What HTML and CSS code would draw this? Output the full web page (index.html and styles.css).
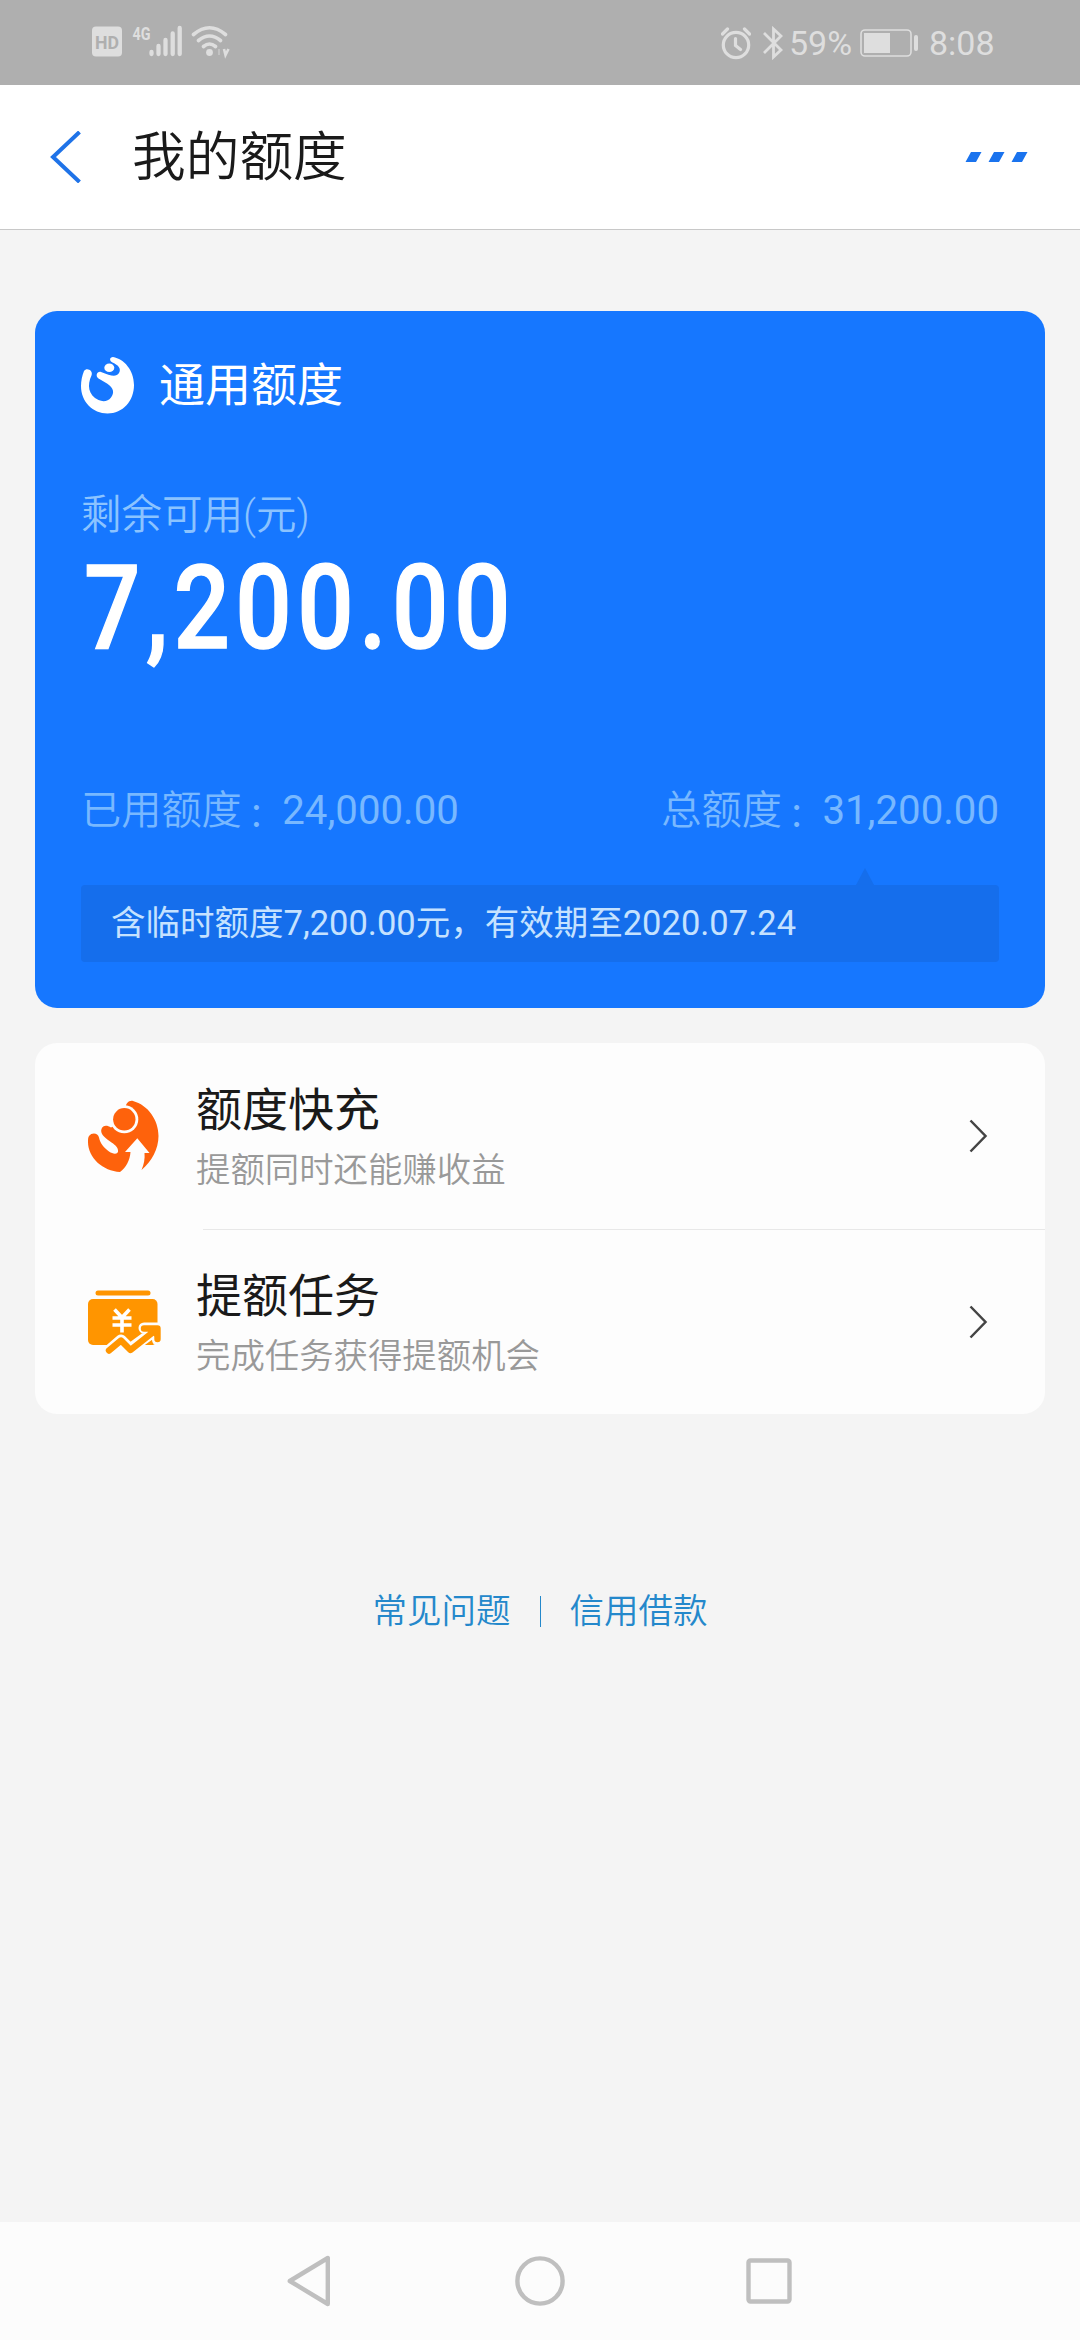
FILE: index.html
```html
<!DOCTYPE html>
<html lang="zh-CN">
<head>
<meta charset="utf-8">
<title>我的额度</title>
<link rel="stylesheet" href="styles.css">
</head>
<body>
<div class="status">
  <svg class="status-left" width="140" height="40" viewBox="0 0 140 40" fill="none" stroke="#dedede">
    <rect x="0" y="4.500" width="30" height="30" rx="4" fill="#dedede" stroke="none"/>
    <text class="hd" x="3" y="26.500" textLength="24" lengthAdjust="spacingAndGlyphs">HD</text>
    <text class="gen" x="40.500" y="17.500" textLength="18" lengthAdjust="spacingAndGlyphs">4G</text>
    <path stroke-width="4.300" stroke-linecap="round" d="M59.500 30v2M66.500 24v8M73.500 18v14M80.700 11.500V32M87.700 6v26"/>
    <path stroke-width="3.600" stroke-linecap="round" d="M101.500 12.500Q117.500-1 133.500 12.500M106.500 18.500Q117.500 9.500 128.500 18.500M111.500 24.500Q117.500 19.500 123.500 24.500"/>
    <circle cx="117.500" cy="30.500" r="3.400" fill="#dedede" stroke="none"/>
    <path stroke-width="2.600" d="M132 27l1.500 6 3-6"/><path stroke-width="2" opacity=".4" d="M127 27v6"/>
  </svg>
  <div class="status-right">
    <svg width="30" height="34" viewBox="0 0 30 34" fill="none" stroke="#dedede" stroke-width="3.200" stroke-linecap="round">
      <circle cx="15" cy="19" r="12.700"/><path d="M14.500 12.500v7l5 4M1.500 8l5-5M28.500 8l-5-5"/>
    </svg>
    <svg class="bt" width="20" height="34" viewBox="0 0 20 34" fill="none" stroke="#dedede" stroke-width="2.800">
      <path d="M1 7l17 17-7.500 7V3l7.500 7L1 27"/>
    </svg>
    <span class="percent">59%</span>
    <svg class="battery" width="59" height="28" viewBox="0 0 59 28">
      <rect x="1" y="1" width="50" height="26" rx="4" fill="none" stroke="#dedede" stroke-width="1.600"/>
      <rect x="4" y="4" width="26" height="20" fill="#dedede"/><rect x="54" y="6" width="4" height="16" rx="2" fill="#dedede"/>
    </svg>
    <span class="time">8:08</span>
  </div>
</div>
<header class="header">
  <svg class="back" width="32" height="52" viewBox="0 0 32 52"><path d="M29.500 1L3 26l26.500 25" fill="none" stroke="#1f73e8" stroke-width="4"/></svg>
  <h1 class="title">我的额度</h1>
  <svg class="more" width="64" height="12" viewBox="0 0 64 12" fill="#1a73ee"><path d="M6 1h10.500l-5.500 10H.500zM29 1h10.500L34 11H23.500zM52 1h10.500L57 11H46.500z"/></svg>
</header>
<main class="main">
  <section class="quota">
    <div class="quota-head">
      <svg width="54" height="57" viewBox="0 0 54 57" fill="#fff">
        <path d="M3 14C1 19 0 24 0 29 0 45 12 56.500 26.500 56.500 42 56.500 53 44 53 28 53 13 43 2 32 0 28.500 0 28 4 31.500 5.500 37.500 8 40.500 12 38 16 35 20.500 30 19 20 15 16 14 14 19 17.500 21.500L26 26.500C33 31 33.500 36 30 40.500 27 44.500 22 45 17.500 43 7 38 6 28 10.500 18.500 12.500 14 6 10 3 14z"/>
        <ellipse cx="28.300" cy="10.800" rx="5" ry="4.300"/>
      </svg>
      <h2 class="quota-title">通用额度</h2>
    </div>
    <div class="label">剩余可用(元)</div>
    <div class="amount">7,200.00</div>
    <div class="totals"><span>已用额度<i class="colon">：</i><b>24,000.00</b></span><span>总额度<i class="colon">：</i><b>31,200.00</b></span></div>
    <div class="notice">含临时额度7,200.00元，有效期至2020.07.24</div>
  </section>
  <section class="list">
    <a class="row">
      <svg class="row-icon" width="76" height="76" viewBox="0 0 76 76">
        <path fill="#fe620c" d="M3 38C6 34 12 35 13 39.500 14 45 18 50 23 53.500 28 57 33 56 32 52 31 47 27 46 22 42 18 39 14 35 15.500 31 17 27 21 27 25 29.500L40 22V10C39 6 43 2 47 3 62 7 72.500 22 72.500 38 72.500 51 66 63 55.500 72 58 66 59 61 58.500 55H63.500L51.300 40.300 39 54H44.500C44 62 40 70 34 74 17 73 2 60 2 44 2 41 2 39.500 3 38z"/>
        <circle cx="38.300" cy="21.300" r="14" fill="#fdfdfd"/><circle cx="38.300" cy="21.300" r="11.200" fill="#fe620c"/>
      </svg>
      <div class="row-text"><h3 class="row-title">额度快充</h3><p class="row-sub">提额同时还能赚收益</p></div>
      <svg class="chevron" width="19" height="34" viewBox="0 0 19 34"><path d="M1.500 1.500L16.500 17l-15 15.500" fill="none" stroke="#444" stroke-width="2.500"/></svg>
    </a>
    <a class="row">
      <svg class="row-icon" width="76" height="76" viewBox="0 0 76 76" fill="none">
        <rect x="9.500" y="6.500" width="55" height="5" rx="2.500" fill="#ff9500"/>
        <rect x="2" y="15" width="69.500" height="46" rx="5" fill="#ff9500"/>
        <path stroke="#fff" stroke-width="3.600" d="M28.500 25.500l7.500 8 7.500-8M26.500 34h19M26.500 41h19M36 33v15.500"/>
        <path stroke="#fdfdfd" stroke-width="11" stroke-linejoin="round" stroke-linecap="round" d="M24 65.500l11-9.500 9 9 26-19M58 44h13.500V56"/>
        <path stroke="#ff9500" stroke-width="6.400" stroke-linecap="round" stroke-linejoin="round" d="M23 66.500l12-10 9.500 9.500 24-19M58 44.500h13.500V55"/>
        <path fill="#ff9500" d="M58 44h15v12z"/>
      </svg>
      <div class="row-text"><h3 class="row-title">提额任务</h3><p class="row-sub">完成任务获得提额机会</p></div>
      <svg class="chevron" width="19" height="34" viewBox="0 0 19 34"><path d="M1.500 1.500L16.500 17l-15 15.500" fill="none" stroke="#444" stroke-width="2.500"/></svg>
    </a>
  </section>
  <footer class="links"><a>常见问题</a><i class="sep"></i><a>信用借款</a></footer>
</main>
<nav class="nav">
  <svg width="52" height="52" viewBox="0 0 52 52"><path d="M42.800 3v46L4.800 26z"/></svg>
  <svg width="52" height="52" viewBox="0 0 52 52"><circle cx="26" cy="26" r="22.600"/></svg>
  <svg width="52" height="52" viewBox="0 0 52 52"><rect x="5.500" y="5.500" width="41" height="41" rx="2"/></svg>
</nav>
</body>
</html>
```
FILE: styles.css
```css
* { box-sizing: border-box; margin: 0; }
body {
  display: flex; flex-direction: column;
  width: 1080px; height: 2340px; overflow: hidden;
  background: #f4f4f4; color: #1a1a1a;
  font-family: Roboto, "Noto Sans CJK SC", sans-serif;
}
svg { display: block; flex: none; }
h1, h2, h3 { font-weight: 400; }

.status {
  display: flex; justify-content: space-between; align-items: center;
  height: 85px; padding: 0 87px 0 92px;
  background: #afafaf; color: #dedede;
}
.status-left { margin-top: -1px; }
.status-right { display: flex; align-items: center; font-size: 34px; line-height: 40px; }
.hd { font: 700 19px Roboto, sans-serif; fill: #afafaf; stroke: none; }
.gen { font: 700 19px Roboto, sans-serif; fill: #dedede; stroke: none; }
.bt { margin: 0 6px 0 12px; }
.percent { width: 61px; }
.battery { margin: 0 10px; }
.time { width: 64px; }

.header {
  display: flex; align-items: center;
  height: 145px; padding: 0 51px 0 50px;
  background: #fff; border-bottom: 1px solid #c8c8c8;
}
.back { margin-right: 50px; }
.title { flex: 1; padding-top: 2px; font-size: 53.7px; font-weight: 350; line-height: 80px; }

.main { flex: 1; padding: 81px 35px 0; }
.quota {
  height: 697px; padding: 46px 46px 0;
  border-radius: 22px; background: #1677ff; color: #fff;
}
.quota-head { display: flex; align-items: center; height: 57px; gap: 24px; }
.quota-title { font-size: 46px; line-height: 54px; padding-bottom: 2px; }
.label { margin-top: 73px; font-size: 40.5px; line-height: 56px; font-weight: 350; color: #8bc3ff; }
.amount {
  height: 120px; margin: 5px 0 0 3px;
  font-size: 117px; line-height: 120px; font-weight: 500; letter-spacing: 6.3px;
  -webkit-text-stroke: 1.4px #fff;
  transform: scaleX(.85); transform-origin: left;
}
.totals {
  display: flex; justify-content: space-between; height: 56px;
  margin-top: 115px; font-size: 40.2px; line-height: 56px; font-weight: 350; color: #78b8ff;
}
.totals b { font-weight: 400; }
.colon { padding-left: 6px; font-size: 34.5px; line-height: 40px; font-style: normal; vertical-align: -3px; }
.notice {
  position: relative; height: 77px; margin-top: 46px; padding-left: 30px;
  border-radius: 4px; background: #156eec; color: #c5e2ff;
  font-size: 34.5px; line-height: 77px;
}
.notice::before {
  content: ""; position: absolute; left: 775px; top: -17px;
  border: 9px solid transparent; border-top: 0; border-bottom: 17px solid #156eec;
}

.list { margin-top: 35px; border-radius: 22px; background: #fdfdfd; }
.row { display: flex; align-items: center; height: 186px; padding: 0 57px 0 51px; }
.row + .row {
  height: 185px;
  background: linear-gradient(#e8e8e8, #e8e8e8) 168px 0 / 842px 1px no-repeat;
}
.row-icon { margin-right: 34px; }
.row-text { flex: 1; padding-top: 8px; }
.row-title { font-size: 46px; line-height: 60px; }
.row-sub { font-size: 34.4px; line-height: 60px; font-weight: 350; color: #999; }

.links {
  display: flex; justify-content: center; align-items: center; gap: 29px;
  margin-top: 171px; font-size: 34.5px; line-height: 52px; color: #2488cb; font-weight: 350;
}
.sep { width: 1px; height: 31px; background: #2488cb; }

.nav {
  display: flex; justify-content: center; align-items: center; gap: 177px;
  height: 118px; background: #fcfcfc;
  fill: none; stroke: #bfbfbf; stroke-width: 4.4; stroke-linejoin: round;
}
```
